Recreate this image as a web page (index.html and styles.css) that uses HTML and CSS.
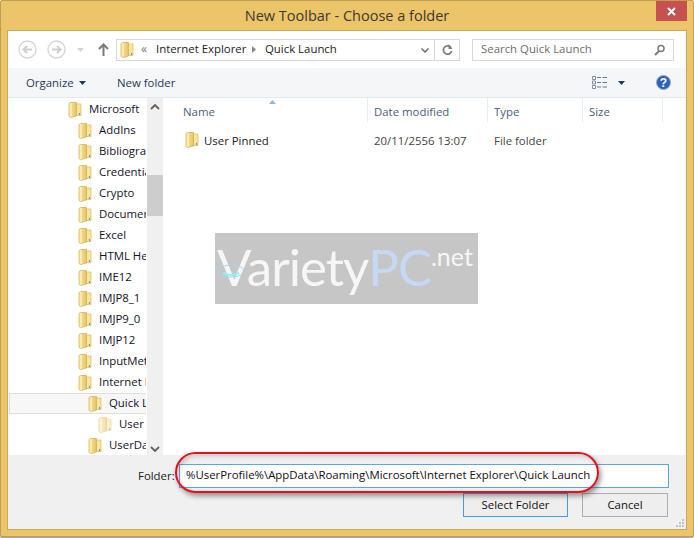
FILE: index.html
```html
<!DOCTYPE html>
<html lang="en">
<head>
<meta charset="utf-8">
<title>New Toolbar - Choose a folder</title>
<link rel="stylesheet" href="styles.css">
</head>
<body>
<svg class="defs" width="0" height="0" aria-hidden="true">
  <defs>
    <linearGradient id="fg" x1="0" y1="0" x2="1" y2="0">
      <stop offset="0" stop-color="#fbeaa6"/><stop offset="1" stop-color="#e6c25f"/>
    </linearGradient>
    <symbol id="folder" viewBox="0 0 14 16">
      <path d="M8 2h5v11.500h-5z" fill="#f8e6a0" stroke="#d8b75c" stroke-width=".7"/>
      <path d="M1 1.500l2-1h5.500v13.500l-5.500 1.500-2-1z" fill="url(#fg)" stroke="#d2ae52" stroke-width=".7"/>
      <path d="M3 1v14" stroke="#fff6cc" stroke-width="1"/>
      <path d="M11.500 11v2" stroke="#4aa3df" stroke-width="1.200"/>
    </symbol>
  </defs>
</svg>
<main class="window">
  <header class="titlebar">
    <h1 class="title">New Toolbar - Choose a folder</h1>
    <button class="close" aria-label="Close">
      <svg width="9" height="9" viewBox="0 0 9 9"><path d="M1 1l7 7M8 1l-7 7" stroke="#fff" stroke-width="2"/></svg>
    </button>
  </header>
  <div class="client">
    <nav class="navbar">
      <svg class="nav-btn" width="19" height="19" viewBox="0 0 19 19"><circle cx="9.500" cy="9.500" r="8.500" fill="#fff" stroke="#d4d4d4" stroke-width="1.300"/><path d="M14 9.500H6M9 6L5.500 9.500 9 13" fill="none" stroke="#cfcfcf" stroke-width="2"/></svg>
      <svg class="nav-btn fwd" width="19" height="19" viewBox="0 0 19 19"><circle cx="9.500" cy="9.500" r="8.500" fill="#fff" stroke="#d4d4d4" stroke-width="1.300"/><path d="M5 9.500h8M10 6l3.500 3.500L10 13" fill="none" stroke="#cfcfcf" stroke-width="2"/></svg>
      <svg class="nav-drop" width="7" height="4" viewBox="0 0 7 4"><path d="M0 0h7L3.500 4z" fill="#d4d4d4"/></svg>
      <svg class="nav-up" width="11" height="13" viewBox="0 0 11 13"><path d="M5.500 13V2M1 6l4.500-4.500L10 6" fill="none" stroke="#7b7b7b" stroke-width="2"/></svg>
      <div class="address">
        <svg class="addr-folder" width="14" height="16"><use href="#folder"/></svg>
        <span class="chev">&laquo;</span>
        <span class="crumb-text">Internet Explorer</span>
        <svg class="crumb" width="4" height="7" viewBox="0 0 4 7"><path d="M0 0l4 3.500L0 7z" fill="#8a8a8a"/></svg>
        <span class="lift">Quick Launch</span>
        <svg class="addr-down" width="8" height="5" viewBox="0 0 8 5"><path d="M.5.500L4 4 7.500.500" fill="none" stroke="#6d6d6d" stroke-width="1.500"/></svg>
        <span class="addr-refresh">
          <svg width="11" height="12" viewBox="0 0 11 12"><path d="M9 3.500A4.200 4.200 0 1 0 9.700 7" fill="none" stroke="#808080" stroke-width="1.800"/><path d="M6.500 0v5h4z" fill="#808080"/></svg>
        </span>
      </div>
      <div class="search">
        <span class="lift">Search Quick Launch</span>
        <svg width="11" height="12" viewBox="0 0 11 12"><circle cx="7" cy="4.500" r="3" fill="none" stroke="#7b7b7b" stroke-width="1.500"/><path d="M5 7l-4 4" stroke="#7b7b7b" stroke-width="2"/></svg>
      </div>
    </nav>
    <div class="toolbar">
      <span class="organize">Organize</span>
      <svg class="tri" width="7" height="4" viewBox="0 0 7 4"><path d="M0 0h7L3.500 4z" fill="#1e395b"/></svg>
      <span class="newfolder">New folder</span>
      <svg class="views" width="16" height="13" viewBox="0 0 16 13"><path d="M.5.500h3v3h-3zM.5 5h3v3h-3zM.5 9.500h3v3h-3z" fill="#fff" stroke="#7f8ea3"/><path d="M5 1.500h4M10.500 1.500H15M5 6.500h4M10.500 6.500H15M5 11h4M10.500 11H15" stroke="#64789a"/></svg>
      <svg class="tri views-tri" width="7" height="4" viewBox="0 0 7 4"><path d="M0 0h7L3.500 4z" fill="#1e395b"/></svg>
      <svg class="help" width="15" height="15" viewBox="0 0 15 15"><circle cx="7.500" cy="7.500" r="7" fill="#2a62b8" stroke="#9aa8c0"/><text x="7.500" y="11.500" class="help-q">?</text></svg>
    </div>
    <div class="panes">
      <ul class="tree">
        <li class="row l0"><svg width="14" height="16"><use href="#folder"/></svg><span>Microsoft</span></li>
        <li class="row l1"><svg width="14" height="16"><use href="#folder"/></svg><span>AddIns</span></li>
        <li class="row l1"><svg width="14" height="16"><use href="#folder"/></svg><span>Bibliographies</span></li>
        <li class="row l1"><svg width="14" height="16"><use href="#folder"/></svg><span>Credentials</span></li>
        <li class="row l1"><svg width="14" height="16"><use href="#folder"/></svg><span>Crypto</span></li>
        <li class="row l1"><svg width="14" height="16"><use href="#folder"/></svg><span>Document</span></li>
        <li class="row l1"><svg width="14" height="16"><use href="#folder"/></svg><span>Excel</span></li>
        <li class="row l1"><svg width="14" height="16"><use href="#folder"/></svg><span>HTML Help</span></li>
        <li class="row l1"><svg width="14" height="16"><use href="#folder"/></svg><span>IME12</span></li>
        <li class="row l1"><svg width="14" height="16"><use href="#folder"/></svg><span>IMJP8_1</span></li>
        <li class="row l1"><svg width="14" height="16"><use href="#folder"/></svg><span>IMJP9_0</span></li>
        <li class="row l1"><svg width="14" height="16"><use href="#folder"/></svg><span>IMJP12</span></li>
        <li class="row l1"><svg width="14" height="16"><use href="#folder"/></svg><span>InputMethod</span></li>
        <li class="row l1"><svg width="14" height="16"><use href="#folder"/></svg><span>Internet Explorer</span></li>
        <li class="row l2 selected"><svg width="14" height="16"><use href="#folder"/></svg><span>Quick Launch</span></li>
        <li class="row l3 faded"><svg width="14" height="16"><use href="#folder"/></svg><span>User Pinned</span></li>
        <li class="row l2"><svg width="14" height="16"><use href="#folder"/></svg><span>UserData</span></li>
      </ul>
      <div class="scrollbar">
        <svg width="10" height="6" viewBox="0 0 10 6"><path d="M1 5l4-4 4 4" fill="none" stroke="#606060" stroke-width="1.800"/></svg>
        <div class="thumb"></div>
        <svg width="10" height="6" viewBox="0 0 10 6"><path d="M1 1l4 4 4-4" fill="none" stroke="#606060" stroke-width="1.800"/></svg>
      </div>
      <section class="list">
        <div class="list-head">
          <span class="col c-name">Name</span>
          <span class="col c-date">Date modified</span>
          <span class="col c-type">Type</span>
          <span class="col c-size">Size</span>
        </div>
        <svg class="sort" width="7" height="4" viewBox="0 0 7 4"><path d="M3.500 0L7 4H0z" fill="#8fb8d8"/></svg>
        <div class="list-row">
          <span class="cell c-name"><svg width="14" height="16"><use href="#folder"/></svg>User Pinned</span>
          <span class="cell c-date">20/11/2556 13:07</span>
          <span class="cell c-type">File folder</span>
        </div>
        <div class="watermark">
          <span class="wm-white">Variety</span><span class="wm-blue">PC</span><span class="wm-net">.net</span>
          <svg class="wm-glow" width="30" height="20" viewBox="0 0 30 20"><ellipse cx="15" cy="10" rx="13" ry="6" fill="none" stroke="#a9d3f2" stroke-width="1"/><path d="M7 12q8 4 16 0" fill="none" stroke="#8ff2fb" stroke-width="2"/></svg>
        </div>
      </section>
    </div>
    <footer class="bottom">
      <div class="folder-row">
        <label class="folder-label">Folder:</label>
        <div class="folder-input">%UserProfile%\AppData\Roaming\Microsoft\Internet Explorer\Quick Launch</div>
      </div>
      <div class="buttons">
        <button class="btn primary">Select Folder</button>
        <button class="btn cancel">Cancel</button>
      </div>
      <div class="callout"></div>
      <svg class="grip" width="9" height="8" viewBox="0 0 9 8"><path d="M7 0h2v2H7zM4 3h2v2H4zM7 3h2v2H7zM1 6h2v2H1zM4 6h2v2H4zM7 6h2v2H7z" fill="#c4c4c4"/></svg>
    </footer>
  </div>
</main>
</body>
</html>
```
FILE: styles.css
```css
* { box-sizing: border-box; }
html, body { margin: 0; padding: 0; width: 694px; height: 538px; background: #fff; overflow: hidden; }
body { font-family: "Open Sans", "Noto Sans", sans-serif; font-size: 11.4px; color: #1a1a1a; }
.defs { position: absolute; }
ul { list-style: none; margin: 0; padding: 0; }
svg { display: block; flex: none; }

.window { width: 694px; height: 537px; background: #ecc469; border: 1px solid #bd9f55; border-radius: 2px; display: flex; flex-direction: column; position: relative; box-shadow: 0 1px 0 #a9a9a9; }
.titlebar { height: 29px; flex: none; display: flex; justify-content: center; align-items: center; position: relative; }
.title { margin: 0; font-size: 14.5px; font-weight: 400; color: #3c3a2e; }
.close { position: absolute; top: 0; right: 6px; width: 31px; height: 20px; background: #c75050; border: 0; padding: 0; display: flex; align-items: center; justify-content: center; }

.client { margin: 0 6px 6px; flex: 1; min-height: 0; border: 1px solid #c9a95a; background: #fff; display: flex; flex-direction: column; position: relative; width: 680px; }

.navbar { height: 37px; flex: none; display: flex; align-items: center; padding: 0 0 0 10px; background: #fff; }
.nav-btn.fwd { margin-left: 10px; }
.nav-drop { margin-left: 11px; }
.nav-up { margin-left: 14px; }
.address { margin-left: 7px; width: 344px; height: 22px; border: 1px solid #d9d9d9; display: flex; align-items: center; position: relative; color: #222; }
.lift { margin-bottom: 2px; }
.addr-folder { margin-left: 3px; }
.chev { margin-left: 7px; width: 15px; color: #777; font-size: 12px; margin-bottom: 2px; }
.crumb-text { width: 86px; white-space: nowrap; margin-bottom: 2px; }
.crumb { margin: 0 9px 0 10px; }
.addr-down { position: absolute; right: 30px; top: 8px; }
.addr-refresh { position: absolute; right: 0; top: 0; bottom: 0; width: 25px; border-left: 1px solid #d9d9d9; display: flex; align-items: center; justify-content: center; }
.search { margin-left: 12px; width: 202px; height: 22px; border: 1px solid #d9d9d9; display: flex; align-items: center; justify-content: space-between; padding: 0 8px 0 8px; color: #6d6d6d; }

.toolbar { height: 30px; flex: none; background: #f5f6f7; border-bottom: 1px solid #e3e8ee; display: flex; align-items: center; padding: 0 15px 0 18px; color: #1e395b; }
.organize { width: 53px; }
.newfolder { margin-left: 31px; }
.views { margin-left: auto; }
.views-tri { margin-left: 10px; }
.help { margin-left: 31px; }
.help-q { font-size: 12px; font-weight: 700; fill: #fff; text-anchor: middle; font-family: "Liberation Sans", sans-serif; }

.panes { height: 357px; flex: none; display: flex; position: relative; }
.tree { width: 138px; margin-right: 1px; flex: none; overflow: hidden; padding-top: 1px; }
.row { height: 21px; display: flex; align-items: center; white-space: nowrap; color: #14121f; }
.row svg { margin-right: 7px; }
.row span { margin-bottom: 2px; }
.l0 { padding-left: 60px; }
.l1 { padding-left: 70px; }
.l2 { padding-left: 80px; }
.l3 { padding-left: 90px; }
.selected { margin-left: 1px; padding-left: 78px; background: #f7f7f7; border: 1px solid #dedede; border-right: 0; }
.faded svg { opacity: .55; }
.scrollbar { width: 16px; flex: none; background: #f0f0f0; display: flex; flex-direction: column; align-items: center; justify-content: space-between; padding: 6px 0 3px; position: relative; }
.thumb { position: absolute; left: 0; right: 0; top: 77px; height: 41px; background: #cdcdcd; }
.list { flex: 1; position: relative; }
.list-head { height: 24px; display: flex; color: #4c607a; }
.col, .cell { display: block; flex: none; white-space: nowrap; }
.col { height: 24px; padding-top: 6px; border-right: 1px solid #e5ecf4; padding-left: 6px; }
.c-name { width: 205px; }
.col.c-name { padding-left: 20px; }
.c-date { width: 120px; }
.c-type { width: 95px; }
.c-size { width: 80px; }
.sort { position: absolute; left: 106px; top: 2px; }
.list-row { display: flex; height: 22px; margin-top: 7px; align-items: center; color: #444; }
.cell { padding-left: 6px; }
.cell.c-name { padding-left: 22px; display: flex; align-items: center; gap: 5px; color: #222; }
.watermark { position: absolute; left: 52px; top: 135px; width: 263px; height: 71px; background: #c6c6c6; font-family: Lato, "Open Sans", sans-serif; font-weight: 400; font-size: 51px; line-height: 68px; padding-left: 2px; display: flex; align-items: flex-start; letter-spacing: -1px; white-space: nowrap; overflow: hidden; }
.wm-white { color: #f6f6f6; }
.wm-blue { color: #c5d8f5; }
.wm-net { color: #f6f6f6; font-size: 25px; line-height: 46px; letter-spacing: 0; }
.wm-glow { position: absolute; left: 1px; top: 28px; }

.bottom { flex: 1; background: #f0f0f0; position: relative; display: flex; flex-direction: column; padding-top: 9px; min-height: 0; }
.folder-row { display: flex; align-items: center; height: 24px; margin-left: 130px; }
.folder-label { width: 41px; color: #1a1a1a; margin-bottom: 2px; }
.folder-input { width: 490px; height: 24px; border: 1px solid #5aa5e8; background: #fff; padding-left: 6px; line-height: 20px; white-space: nowrap; color: #111; }
.buttons { display: flex; margin: 5px 0 0 455px; gap: 14px; }
.btn { height: 24px; font: inherit; color: #111; padding: 0 0 2px; background: #eeeeee; }
.primary { width: 105px; border: 1px solid #3f9cf0; }
.cancel { width: 86px; border: 1px solid #adadad; }
.callout { position: absolute; left: 167px; top: -3px; width: 424px; height: 41px; border: 2px solid #e50f1e; border-radius: 21px; box-shadow: 2px 3px 5px rgba(70, 70, 70, .55), inset 2px 2px 4px rgba(70, 70, 70, .25); pointer-events: none; }
.grip { position: absolute; right: 2px; bottom: 2px; }
```
